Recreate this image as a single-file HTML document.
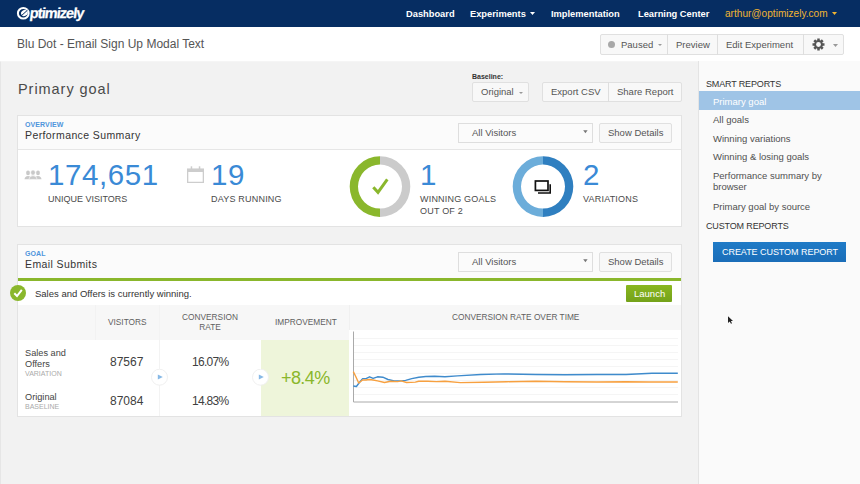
<!DOCTYPE html>
<html><head><meta charset="utf-8">
<style>
*{margin:0;padding:0;box-sizing:border-box;}
html,body{width:860px;height:484px;overflow:hidden;background:#f2f2f2;font-family:"Liberation Sans",sans-serif;color:#333;}
.a{position:absolute;white-space:nowrap;}
#nav{position:absolute;left:0;top:0;width:860px;height:27px;background:#062d62;box-shadow:0 0.5px 0 rgba(6,45,98,0.5);}
.nv{position:absolute;top:7.5px;font-size:9.3px;font-weight:bold;color:#fff;line-height:12px;}
#hdr{position:absolute;left:0;top:27px;width:860px;height:34px;background:#fff;box-shadow:0 0.5px 0 #f8f8f8;}
#side{position:absolute;left:698px;top:61px;width:162px;height:423px;background:#fafafa;border-left:1px solid #e4e4e4;}
.btn{position:absolute;background:#f8f8f8;border:1px solid #e0e0e0;border-radius:2px;}
.bt{position:absolute;font-size:9.5px;color:#555;line-height:11px;}
.panel{position:absolute;background:#fff;border:1px solid #e3e3e3;}
.ph{position:absolute;left:0;top:0;width:100%;background:#fbfbfb;border-bottom:1px solid #e6e6e6;}
.lbl{position:absolute;font-size:7px;font-weight:bold;color:#4f95dc;line-height:9px;letter-spacing:0.1px;}
.ttl{position:absolute;font-size:10.5px;color:#333;line-height:12px;letter-spacing:0.4px;}
.big{position:absolute;font-size:29.5px;color:#3a8ad6;line-height:30px;}
.cap{position:absolute;font-size:9px;color:#4a4a4a;line-height:11.5px;letter-spacing:0.2px;}
.sel{position:absolute;background:#fbfbfb;border:1px solid #dedede;}
.th{position:absolute;font-size:8.3px;color:#5f5f5f;line-height:11px;white-space:nowrap;}
.si{position:absolute;left:14px;font-size:9.5px;color:#505050;line-height:11px;}
</style></head><body>
<div class="a" style="left:0;top:61px;width:1px;height:423px;background:#e6e6e6;"></div>
<div id="nav">
  <svg class="a" style="left:16px;top:6px" width="15" height="15" viewBox="0 0 15 15">
    <ellipse cx="7.3" cy="7.2" rx="5.4" ry="5.3" fill="none" stroke="#fff" stroke-width="2"/>
    <ellipse cx="8.4" cy="7" rx="3.4" ry="3" fill="#fff" transform="rotate(-30 8.4 7)"/>
    <line x1="5.5" y1="9.6" x2="11.5" y2="4.2" stroke="#062d62" stroke-width="1"/>
  </svg>
  <div class="a" style="left:28.5px;top:5px;font-size:14.5px;font-weight:bold;color:#fff;letter-spacing:-0.95px;line-height:16px;transform:skewX(-7deg);transform-origin:0 100%;-webkit-text-stroke:0.25px #fff;">ptimizely</div>
  <div class="nv" style="left:406px;">Dashboard</div>
  <div class="nv" style="left:470px;">Experiments</div>
  <svg class="a" style="left:530px;top:12px" width="5" height="3"><path d="M0 0H5L2.5 3Z" fill="#fff"/></svg>
  <div class="nv" style="left:551px;">Implementation</div>
  <div class="nv" style="left:638px;">Learning Center</div>
  <div class="nv" style="left:725px;color:#f0b432;font-weight:normal;font-size:10.1px;">arthur@optimizely.com</div>
  <svg class="a" style="left:832px;top:12px" width="5" height="3"><path d="M0 0H5L2.5 3Z" fill="#f0b432"/></svg>
</div>
<div id="hdr">
  <div class="a" style="left:17px;top:10px;font-size:12px;color:#555;line-height:14px;">Blu Dot - Email Sign Up Modal Text</div>
  <div class="btn" style="left:600px;top:7px;width:244px;height:21px;"></div>
  <div class="a" style="left:667px;top:7px;width:1px;height:21px;background:#dedede"></div>
  <div class="a" style="left:717px;top:7px;width:1px;height:21px;background:#dedede"></div>
  <div class="a" style="left:803px;top:7px;width:1px;height:21px;background:#dedede"></div>
  <div class="a" style="left:608px;top:14px;width:7px;height:7px;border-radius:50%;background:#a8a8a8"></div>
  <div class="bt" style="left:621px;top:12px;">Paused</div>
  <svg class="a" style="left:658px;top:17px" width="4" height="2"><path d="M0 0H4L2 2Z" fill="#999"/></svg>
  <div class="bt" style="left:676px;top:12px;">Preview</div>
  <div class="bt" style="left:726px;top:12px;">Edit Experiment</div>
  <svg class="a" style="left:812px;top:10.5px" width="13" height="13" viewBox="-6.5 -6.5 13 13">
    <g fill="#555">
      <circle r="4.4"/>
      <g id="t"><rect x="-1.25" y="-6" width="2.5" height="3"/></g>
      <use href="#t" transform="rotate(45)"/><use href="#t" transform="rotate(90)"/><use href="#t" transform="rotate(135)"/>
      <use href="#t" transform="rotate(180)"/><use href="#t" transform="rotate(225)"/><use href="#t" transform="rotate(270)"/><use href="#t" transform="rotate(315)"/>
    </g>
    <circle r="2.4" fill="#f8f8f8"/>
  </svg>
  <svg class="a" style="left:833px;top:17px" width="5" height="3"><path d="M0 0H5L2.5 3Z" fill="#999"/></svg>
</div>

<!-- main -->
<div class="a" style="left:18px;top:81px;font-size:14.5px;color:#4a4a4a;line-height:17px;letter-spacing:0.95px;">Primary goal</div>
<div class="a" style="left:472px;top:73px;font-size:7px;font-weight:bold;color:#333;line-height:8px;">Baseline:</div>
<div class="btn" style="left:472px;top:82px;width:57px;height:20px;"></div>
<div class="bt" style="left:481px;top:86px;">Original</div>
<svg class="a" style="left:519px;top:92px" width="4" height="2"><path d="M0 0H4L2 2Z" fill="#999"/></svg>
<div class="btn" style="left:542px;top:82px;width:140px;height:20px;"></div>
<div class="a" style="left:608px;top:82px;width:1px;height:20px;background:#dedede"></div>
<div class="bt" style="left:551px;top:86px;">Export CSV</div>
<div class="bt" style="left:617px;top:86px;">Share Report</div>

<!-- panel 1 -->
<div class="panel" style="left:17px;top:115px;width:665px;height:112px;">
  <div class="ph" style="height:34px;"></div>
</div>
<div class="lbl" style="left:25px;top:120px;">OVERVIEW</div>
<div class="ttl" style="left:25px;top:129px;">Performance Summary</div>
<div class="sel" style="left:458px;top:123px;width:135px;height:20px;"></div>
<div class="bt" style="left:472px;top:127px;">All Visitors</div>
<svg class="a" style="left:583px;top:130px" width="5" height="4"><path d="M0.2 0.3H4.6L2.4 3.3Z" fill="#777"/></svg>
<div class="btn" style="left:599px;top:123px;width:73px;height:20px;"></div>
<div class="bt" style="left:608px;top:127px;">Show Details</div>

<svg class="a" style="left:24px;top:170px" width="18" height="10" viewBox="0 0 18 10" fill="#c9c9c9">
  <ellipse cx="4" cy="2.9" rx="1.9" ry="2.3"/><path d="M0.5 9.3Q0.8 6.3 4 6Q7.2 6.3 7.5 9.3Z"/>
  <ellipse cx="14" cy="2.9" rx="1.9" ry="2.3"/><path d="M10.5 9.3Q10.8 6.3 14 6Q17.2 6.3 17.5 9.3Z"/>
  <ellipse cx="9" cy="2.6" rx="2.3" ry="2.6" stroke="#fff" stroke-width="0.6"/><path d="M4.8 9.4Q5.2 5.9 9 5.6Q12.8 5.9 13.2 9.4Z" stroke="#fff" stroke-width="0.6"/>
</svg>
<div class="big" style="left:48px;top:159.8px;letter-spacing:0.6px;">174,651</div>
<div class="cap" style="left:48px;top:194.2px;letter-spacing:0;">UNIQUE VISITORS</div>

<svg class="a" style="left:187px;top:166px" width="17" height="17" viewBox="0 0 17 17">
  <rect x="0.65" y="3.3" width="15.7" height="13.1" fill="none" stroke="#cdcdcd" stroke-width="1.3"/>
  <rect x="0" y="2.7" width="17" height="3.3" fill="#cdcdcd"/>
  <rect x="3.7" y="0.3" width="1.5" height="3" fill="#cdcdcd"/><rect x="11.8" y="0.3" width="1.5" height="3" fill="#cdcdcd"/>
</svg>
<div class="big" style="left:211px;top:159.8px;letter-spacing:0.6px;">19</div>
<div class="cap" style="left:211px;top:194.2px;">DAYS RUNNING</div>

<svg class="a" style="left:349px;top:156px" width="62" height="62" viewBox="0 0 62 62">
  <path d="M31 0.3A30.3 30.3 0 0 0 31 60.9V52.6A22 22 0 0 1 31 8.6Z" fill="#8ab72c"/>
  <path d="M31 0.3A30.3 30.3 0 0 1 31 60.9V52.6A22 22 0 0 0 31 8.6Z" fill="#cbcbcb"/>
  <path d="M24.3 31.2L29 36.3L38.3 23.3" fill="none" stroke="#8ab72c" stroke-width="3"/>
</svg>
<div class="big" style="left:420px;top:159.8px;">1</div>
<div class="cap" style="left:420px;top:194.2px;">WINNING GOALS<br>OUT OF 2</div>

<svg class="a" style="left:512px;top:156px" width="62" height="62" viewBox="0 0 62 62">
  <path d="M31 0.3A30.3 30.3 0 0 0 31 60.9V52.6A22 22 0 0 1 31 8.6Z" fill="#6cadda"/>
  <path d="M31 0.3A30.3 30.3 0 0 1 31 60.9V52.6A22 22 0 0 0 31 8.6Z" fill="#2f7fc0"/>
  <rect x="23.4" y="25" width="12.6" height="9.4" fill="none" stroke="#111" stroke-width="1.7"/>
  <path d="M38.2 28.2V37H26" fill="none" stroke="#111" stroke-width="1.6"/>
</svg>
<div class="big" style="left:583px;top:159.8px;">2</div>
<div class="cap" style="left:583px;top:194.2px;">VARIATIONS</div>

<!-- panel 2 -->
<div class="panel" style="left:17px;top:244px;width:665px;height:173px;">
  <div class="ph" style="height:33px;border-bottom:none;"></div>
  <div class="a" style="left:0;top:33px;width:663px;height:3px;background:#8ab72c;"></div>
</div>
<div class="lbl" style="left:25px;top:249px;">GOAL</div>
<div class="ttl" style="left:25px;top:258px;">Email Submits</div>
<div class="sel" style="left:458px;top:252px;width:135px;height:20px;"></div>
<div class="bt" style="left:472px;top:255.7px;">All Visitors</div>
<svg class="a" style="left:583px;top:259px" width="5" height="4"><path d="M0.2 0.3H4.6L2.4 3.3Z" fill="#777"/></svg>
<div class="btn" style="left:599px;top:252px;width:73px;height:20px;"></div>
<div class="bt" style="left:608px;top:256px;">Show Details</div>

<svg class="a" style="left:10px;top:285px" width="16" height="16" viewBox="0 0 16 16">
  <circle cx="8" cy="8" r="8" fill="#8ab72c"/>
  <path d="M4.3 8.3L7 11L11.8 4.8" fill="none" stroke="#fff" stroke-width="2"/>
</svg>
<div class="a" style="left:35px;top:288px;font-size:9.5px;color:#333;line-height:11px;">Sales and Offers is currently winning.</div>
<div class="a" style="left:626px;top:285px;width:45.5px;height:16.5px;background:linear-gradient(#8ab71f,#74a21a);border-radius:1px;"></div>
<div class="a" style="left:634px;top:288px;font-size:9.5px;color:#fff;line-height:11px;">Launch</div>

<!-- table header -->
<div class="a" style="left:18px;top:305px;width:663px;height:35px;background:#f7f7f7;"></div>
<div class="a" style="left:349px;top:330px;width:332px;height:86px;background:#fff;"></div>
<div class="a" style="left:95px;top:305px;width:1px;height:35px;background:#f2f2f2;"></div>
<div class="a" style="left:159px;top:305px;width:1px;height:111px;background:#f3f3f3;"></div>
<div class="a" style="left:349px;top:305px;width:1px;height:25px;background:#f0f0f0;"></div>
<div class="a" style="left:261px;top:340px;width:88px;height:76px;background:#eef5da;"></div>
<div class="th" style="left:108px;top:317px;">VISITORS</div>
<div class="th" style="left:170px;top:312px;text-align:center;width:80px;line-height:10px;">CONVERSION<br>RATE</div>
<div class="th" style="left:275px;top:317px;">IMPROVEMENT</div>
<div class="th" style="left:452px;top:312px;">CONVERSION RATE OVER TIME</div>

<div class="a" style="left:25px;top:348px;font-size:9.2px;color:#444;line-height:11.2px;">Sales and<br>Offers</div>
<div class="a" style="left:25px;top:370px;font-size:7px;color:#aaa;line-height:8px;">VARIATION</div>
<div class="a" style="left:25px;top:392px;font-size:9.2px;color:#444;line-height:11px;">Original</div>
<div class="a" style="left:25px;top:403px;font-size:7px;color:#aaa;line-height:8px;">BASELINE</div>
<div class="a" style="left:110px;top:355px;font-size:12px;color:#404040;line-height:14px;">87567</div>
<div class="a" style="left:110px;top:394px;font-size:12px;color:#404040;line-height:14px;">87084</div>
<div class="a" style="left:192px;top:355px;font-size:12px;color:#404040;line-height:14px;letter-spacing:-0.7px;">16.07%</div>
<div class="a" style="left:192px;top:394px;font-size:12px;color:#404040;line-height:14px;letter-spacing:-0.7px;">14.83%</div>
<div class="a" style="left:281px;top:368px;font-size:18px;color:#8ab72c;line-height:20px;letter-spacing:-0.6px;">+8.4%</div>
<svg class="a" style="left:151px;top:369px" width="18" height="18" viewBox="0 0 18 18"><circle cx="8.5" cy="8.2" r="8" fill="#fff" stroke="#f0f0f0"/><path d="M6.8 5.5V10.5L11.8 8Z" fill="#88b9e6"/></svg>
<svg class="a" style="left:252px;top:369px" width="18" height="18" viewBox="0 0 18 18"><circle cx="8.5" cy="8.2" r="8" fill="#fff" stroke="#f0f0f0"/><path d="M6.8 5.5V10.5L11.8 8Z" fill="#88b9e6"/></svg>

<!-- chart -->
<svg class="a" style="left:0;top:0" width="860" height="484" viewBox="0 0 860 484">
  <g stroke="#f5f5f5" stroke-width="1"><line x1="354" y1="338.5" x2="678" y2="338.5"/><line x1="354" y1="345.5" x2="678" y2="345.5"/><line x1="354" y1="352.5" x2="678" y2="352.5"/><line x1="354" y1="359.5" x2="678" y2="359.5"/><line x1="354" y1="366.5" x2="678" y2="366.5"/><line x1="354" y1="373.5" x2="678" y2="373.5"/><line x1="354" y1="380.5" x2="678" y2="380.5"/><line x1="354" y1="387.5" x2="678" y2="387.5"/><line x1="354" y1="394.5" x2="678" y2="394.5"/></g>
  <path d="M353.5 331.5V402H678" fill="none" stroke="#aaa" stroke-width="1"/>
  <path d="M353.3 386.0 L356.4 386.5 L359.0 383.0 L362.6 378.6 L366.0 378.6 L369.6 376.8 L373.1 378.3 L377.5 376.8 L382.8 377.2 L388.0 379.5 L394.2 380.9 L401.2 380.9 L405.6 380.4 L411.8 378.6 L418.8 377.2 L425.8 376.5 L434.6 376.3 L445.0 376.8 L457.4 375.9 L480.7 374.5 L504.0 373.9 L536.0 374.5 L565.0 374.8 L597.0 374.5 L626.0 374.5 L652.0 373.3 L677.8 373.3" fill="none" stroke="#3f8bcc" stroke-width="1.4" stroke-linejoin="round"/>
  <path d="M353.3 371.6 L355.5 376.0 L358.7 383.0 L362.6 380.0 L366.0 380.0 L369.6 379.5 L373.1 380.0 L377.5 380.9 L384.5 382.5 L390.7 381.2 L397.7 381.6 L401.2 380.9 L406.5 382.5 L415.3 382.1 L418.8 381.2 L427.6 381.2 L436.4 381.6 L445.0 381.2 L460.3 382.6 L483.6 382.3 L506.9 381.7 L536.0 381.2 L565.0 381.7 L597.0 382.0 L626.0 381.7 L649.3 382.0 L677.8 382.0" fill="none" stroke="#f7a03f" stroke-width="1.4" stroke-linejoin="round"/>
</svg>

<!-- sidebar -->
<div id="side">
  <div class="a" style="left:7px;top:18px;font-size:9px;color:#333;line-height:11px;letter-spacing:-0.15px;">SMART REPORTS</div>
  <div class="a" style="left:0;top:30px;width:162px;height:19px;background:#9fc4e6;"></div>
  <div class="si" style="top:35px;color:#fff;">Primary goal</div>
  <div class="si" style="top:53.3px;">All goals</div>
  <div class="si" style="top:71.8px;">Winning variations</div>
  <div class="si" style="top:90.4px;">Winning &amp; losing goals</div>
  <div class="si" style="top:110.2px;line-height:10.6px;">Performance summary by<br>browser</div>
  <div class="si" style="top:139.5px;">Primary goal by source</div>
  <div class="a" style="left:7px;top:159.8px;font-size:9px;color:#333;line-height:11px;letter-spacing:-0.15px;">CUSTOM REPORTS</div>
  <div class="a" style="left:14px;top:181px;width:133px;height:20px;background:linear-gradient(#1f7bc7,#1a6db8);"></div>
  <div class="a" style="left:23px;top:186px;font-size:9px;color:#fff;line-height:11px;letter-spacing:-0.05px;">CREATE CUSTOM REPORT</div>
</div>
<svg class="a" style="left:728px;top:315.5px" width="5" height="8" viewBox="0 0 6 9"><path d="M0 0V8L2 6.2L3.6 9L4.8 8.4L3.4 5.6H6Z" fill="#222"/></svg>
</body></html>
